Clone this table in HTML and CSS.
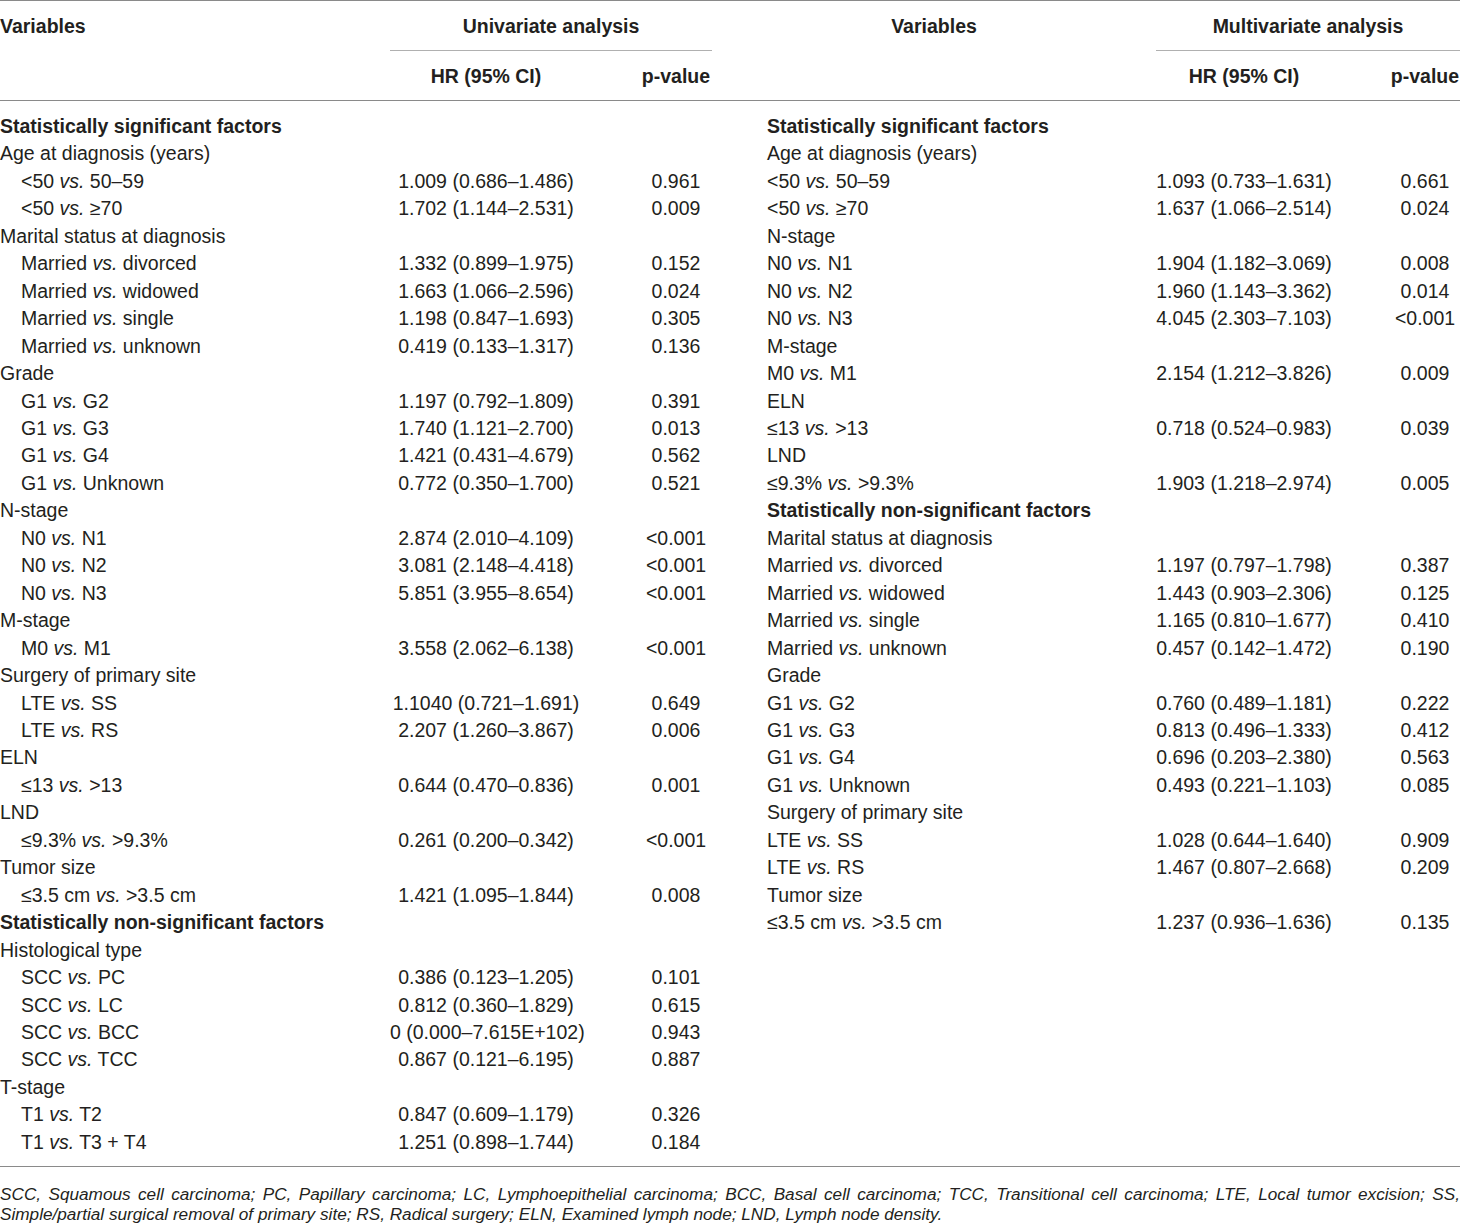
FILE: index.html
```html
<!DOCTYPE html>
<html lang="en">
<head>
<meta charset="utf-8">
<title>Cox regression analysis</title>
<link rel="stylesheet" href="styles.css">
</head>
<body>
<table class="tbl">
  <colgroup>
    <col class="c-var1"><col class="c-hr1"><col class="c-p1">
    <col class="c-var2"><col class="c-hr2"><col class="c-p2">
  </colgroup>
  <thead>
    <tr class="h1">
      <th class="var1">Variables</th>
      <th colspan="2" class="grp">Univariate analysis</th>
      <th class="var2h">Variables</th>
      <th colspan="2" class="grp">Multivariate analysis</th>
    </tr>
    <tr class="h2">
      <th></th><th class="hr">HR (95% CI)</th><th class="p">p-value</th>
      <th></th><th class="hr">HR (95% CI)</th><th class="p">p-value</th>
    </tr>
  </thead>
  <tbody>
    <tr class="first"><td class="b">Statistically significant factors</td><td></td><td></td><td class="v2 b">Statistically significant factors</td><td></td><td></td></tr>
    <tr><td>Age at diagnosis (years)</td><td></td><td></td><td class="v2">Age at diagnosis (years)</td><td></td><td></td></tr>
    <tr><td class="in">&lt;50 <i>vs.</i> 50–59</td><td class="hr">1.009 (0.686–1.486)</td><td class="p">0.961</td><td class="v2">&lt;50 <i>vs.</i> 50–59</td><td class="hr">1.093 (0.733–1.631)</td><td class="p">0.661</td></tr>
    <tr><td class="in">&lt;50 <i>vs.</i> ≥70</td><td class="hr">1.702 (1.144–2.531)</td><td class="p">0.009</td><td class="v2">&lt;50 <i>vs.</i> ≥70</td><td class="hr">1.637 (1.066–2.514)</td><td class="p">0.024</td></tr>
    <tr><td>Marital status at diagnosis</td><td></td><td></td><td class="v2">N-stage</td><td></td><td></td></tr>
    <tr><td class="in">Married <i>vs.</i> divorced</td><td class="hr">1.332 (0.899–1.975)</td><td class="p">0.152</td><td class="v2">N0 <i>vs.</i> N1</td><td class="hr">1.904 (1.182–3.069)</td><td class="p">0.008</td></tr>
    <tr><td class="in">Married <i>vs.</i> widowed</td><td class="hr">1.663 (1.066–2.596)</td><td class="p">0.024</td><td class="v2">N0 <i>vs.</i> N2</td><td class="hr">1.960 (1.143–3.362)</td><td class="p">0.014</td></tr>
    <tr><td class="in">Married <i>vs.</i> single</td><td class="hr">1.198 (0.847–1.693)</td><td class="p">0.305</td><td class="v2">N0 <i>vs.</i> N3</td><td class="hr">4.045 (2.303–7.103)</td><td class="p">&lt;0.001</td></tr>
    <tr><td class="in">Married <i>vs.</i> unknown</td><td class="hr">0.419 (0.133–1.317)</td><td class="p">0.136</td><td class="v2">M-stage</td><td></td><td></td></tr>
    <tr><td>Grade</td><td></td><td></td><td class="v2">M0 <i>vs.</i> M1</td><td class="hr">2.154 (1.212–3.826)</td><td class="p">0.009</td></tr>
    <tr><td class="in">G1 <i>vs.</i> G2</td><td class="hr">1.197 (0.792–1.809)</td><td class="p">0.391</td><td class="v2">ELN</td><td></td><td></td></tr>
    <tr><td class="in">G1 <i>vs.</i> G3</td><td class="hr">1.740 (1.121–2.700)</td><td class="p">0.013</td><td class="v2">≤13 <i>vs.</i> &gt;13</td><td class="hr">0.718 (0.524–0.983)</td><td class="p">0.039</td></tr>
    <tr><td class="in">G1 <i>vs.</i> G4</td><td class="hr">1.421 (0.431–4.679)</td><td class="p">0.562</td><td class="v2">LND</td><td></td><td></td></tr>
    <tr><td class="in">G1 <i>vs.</i> Unknown</td><td class="hr">0.772 (0.350–1.700)</td><td class="p">0.521</td><td class="v2">≤9.3% <i>vs.</i> &gt;9.3%</td><td class="hr">1.903 (1.218–2.974)</td><td class="p">0.005</td></tr>
    <tr><td>N-stage</td><td></td><td></td><td class="v2 b">Statistically non-significant factors</td><td></td><td></td></tr>
    <tr><td class="in">N0 <i>vs.</i> N1</td><td class="hr">2.874 (2.010–4.109)</td><td class="p">&lt;0.001</td><td class="v2">Marital status at diagnosis</td><td></td><td></td></tr>
    <tr><td class="in">N0 <i>vs.</i> N2</td><td class="hr">3.081 (2.148–4.418)</td><td class="p">&lt;0.001</td><td class="v2">Married <i>vs.</i> divorced</td><td class="hr">1.197 (0.797–1.798)</td><td class="p">0.387</td></tr>
    <tr><td class="in">N0 <i>vs.</i> N3</td><td class="hr">5.851 (3.955–8.654)</td><td class="p">&lt;0.001</td><td class="v2">Married <i>vs.</i> widowed</td><td class="hr">1.443 (0.903–2.306)</td><td class="p">0.125</td></tr>
    <tr><td>M-stage</td><td></td><td></td><td class="v2">Married <i>vs.</i> single</td><td class="hr">1.165 (0.810–1.677)</td><td class="p">0.410</td></tr>
    <tr><td class="in">M0 <i>vs.</i> M1</td><td class="hr">3.558 (2.062–6.138)</td><td class="p">&lt;0.001</td><td class="v2">Married <i>vs.</i> unknown</td><td class="hr">0.457 (0.142–1.472)</td><td class="p">0.190</td></tr>
    <tr><td>Surgery of primary site</td><td></td><td></td><td class="v2">Grade</td><td></td><td></td></tr>
    <tr><td class="in">LTE <i>vs.</i> SS</td><td class="hr">1.1040 (0.721–1.691)</td><td class="p">0.649</td><td class="v2">G1 <i>vs.</i> G2</td><td class="hr">0.760 (0.489–1.181)</td><td class="p">0.222</td></tr>
    <tr><td class="in">LTE <i>vs.</i> RS</td><td class="hr">2.207 (1.260–3.867)</td><td class="p">0.006</td><td class="v2">G1 <i>vs.</i> G3</td><td class="hr">0.813 (0.496–1.333)</td><td class="p">0.412</td></tr>
    <tr><td>ELN</td><td></td><td></td><td class="v2">G1 <i>vs.</i> G4</td><td class="hr">0.696 (0.203–2.380)</td><td class="p">0.563</td></tr>
    <tr><td class="in">≤13 <i>vs.</i> &gt;13</td><td class="hr">0.644 (0.470–0.836)</td><td class="p">0.001</td><td class="v2">G1 <i>vs.</i> Unknown</td><td class="hr">0.493 (0.221–1.103)</td><td class="p">0.085</td></tr>
    <tr><td>LND</td><td></td><td></td><td class="v2">Surgery of primary site</td><td></td><td></td></tr>
    <tr><td class="in">≤9.3% <i>vs.</i> &gt;9.3%</td><td class="hr">0.261 (0.200–0.342)</td><td class="p">&lt;0.001</td><td class="v2">LTE <i>vs.</i> SS</td><td class="hr">1.028 (0.644–1.640)</td><td class="p">0.909</td></tr>
    <tr><td>Tumor size</td><td></td><td></td><td class="v2">LTE <i>vs.</i> RS</td><td class="hr">1.467 (0.807–2.668)</td><td class="p">0.209</td></tr>
    <tr><td class="in">≤3.5 cm <i>vs.</i> &gt;3.5 cm</td><td class="hr">1.421 (1.095–1.844)</td><td class="p">0.008</td><td class="v2">Tumor size</td><td></td><td></td></tr>
    <tr><td class="b">Statistically non-significant factors</td><td></td><td></td><td class="v2">≤3.5 cm <i>vs.</i> &gt;3.5 cm</td><td class="hr">1.237 (0.936–1.636)</td><td class="p">0.135</td></tr>
    <tr><td>Histological type</td><td></td><td></td><td></td><td></td><td></td></tr>
    <tr><td class="in">SCC <i>vs.</i> PC</td><td class="hr">0.386 (0.123–1.205)</td><td class="p">0.101</td><td></td><td></td><td></td></tr>
    <tr><td class="in">SCC <i>vs.</i> LC</td><td class="hr">0.812 (0.360–1.829)</td><td class="p">0.615</td><td></td><td></td><td></td></tr>
    <tr><td class="in">SCC <i>vs.</i> BCC</td><td class="hr">0 (0.000–7.615E+102)</td><td class="p">0.943</td><td></td><td></td><td></td></tr>
    <tr><td class="in">SCC <i>vs.</i> TCC</td><td class="hr">0.867 (0.121–6.195)</td><td class="p">0.887</td><td></td><td></td><td></td></tr>
    <tr><td>T-stage</td><td></td><td></td><td></td><td></td><td></td></tr>
    <tr><td class="in">T1 <i>vs.</i> T2</td><td class="hr">0.847 (0.609–1.179)</td><td class="p">0.326</td><td></td><td></td><td></td></tr>
    <tr class="last"><td class="in">T1 <i>vs.</i> T3 + T4</td><td class="hr">1.251 (0.898–1.744)</td><td class="p">0.184</td><td></td><td></td><td></td></tr>
  </tbody>
</table>
<p class="note">SCC, Squamous cell carcinoma; PC, Papillary carcinoma; LC, Lymphoepithelial carcinoma; BCC, Basal cell carcinoma; TCC, Transitional cell carcinoma; LTE, Local tumor excision; SS, Simple/partial surgical removal of primary site; RS, Radical surgery; ELN, Examined lymph node; LND, Lymph node density.</p>
</body>
</html>
```
FILE: styles.css
```css
html, body {
  margin: 0;
  padding: 0;
  background: #ffffff;
}
body {
  width: 1460px;
  font-family: "Liberation Sans", Arial, sans-serif;
  color: #231f20;
  font-size: 19.5px;
}
.tbl {
  width: 1460px;
  border-collapse: collapse;
  table-layout: fixed;
  border-top: 1.5px solid #8a8a8a;
  border-bottom: 1.5px solid #8a8a8a;
}
.c-var1 { width: 390px; }
.c-hr1 { width: 192px; }
.c-p1 { width: 130px; }
.c-var2 { width: 444px; }
.c-hr2 { width: 176px; }
.c-p2 { width: 128px; }
th, td {
  padding: 0;
  white-space: nowrap;
}
th {
  font-weight: bold;
  line-height: 24px;
  vertical-align: middle;
}
thead .h1 th { height: 49px; }
thead .h2 th { height: 49px; border-bottom: 1.5px solid #8a8a8a; }
.var1 { text-align: left; }
.var2h { text-align: center; }
.grp {
  text-align: center;
  border-bottom: 1.5px solid #b0b0b0;
}
td {
  height: 27.46px;
  line-height: 27.46px;
  vertical-align: middle;
}
tbody .first td { padding-top: 12px; }
tbody .last td { padding-bottom: 10px; }
.b { font-weight: bold; }
.in { padding-left: 21px; }
.v2 { padding-left: 55px; }
.hr { text-align: center; }
.p { text-align: center; padding-left: 58px; }
.note {
  margin: 0;
  padding-top: 17px;
  font-style: italic;
  font-size: 17.2px;
  line-height: 20px;
  text-align: justify;
}
```
